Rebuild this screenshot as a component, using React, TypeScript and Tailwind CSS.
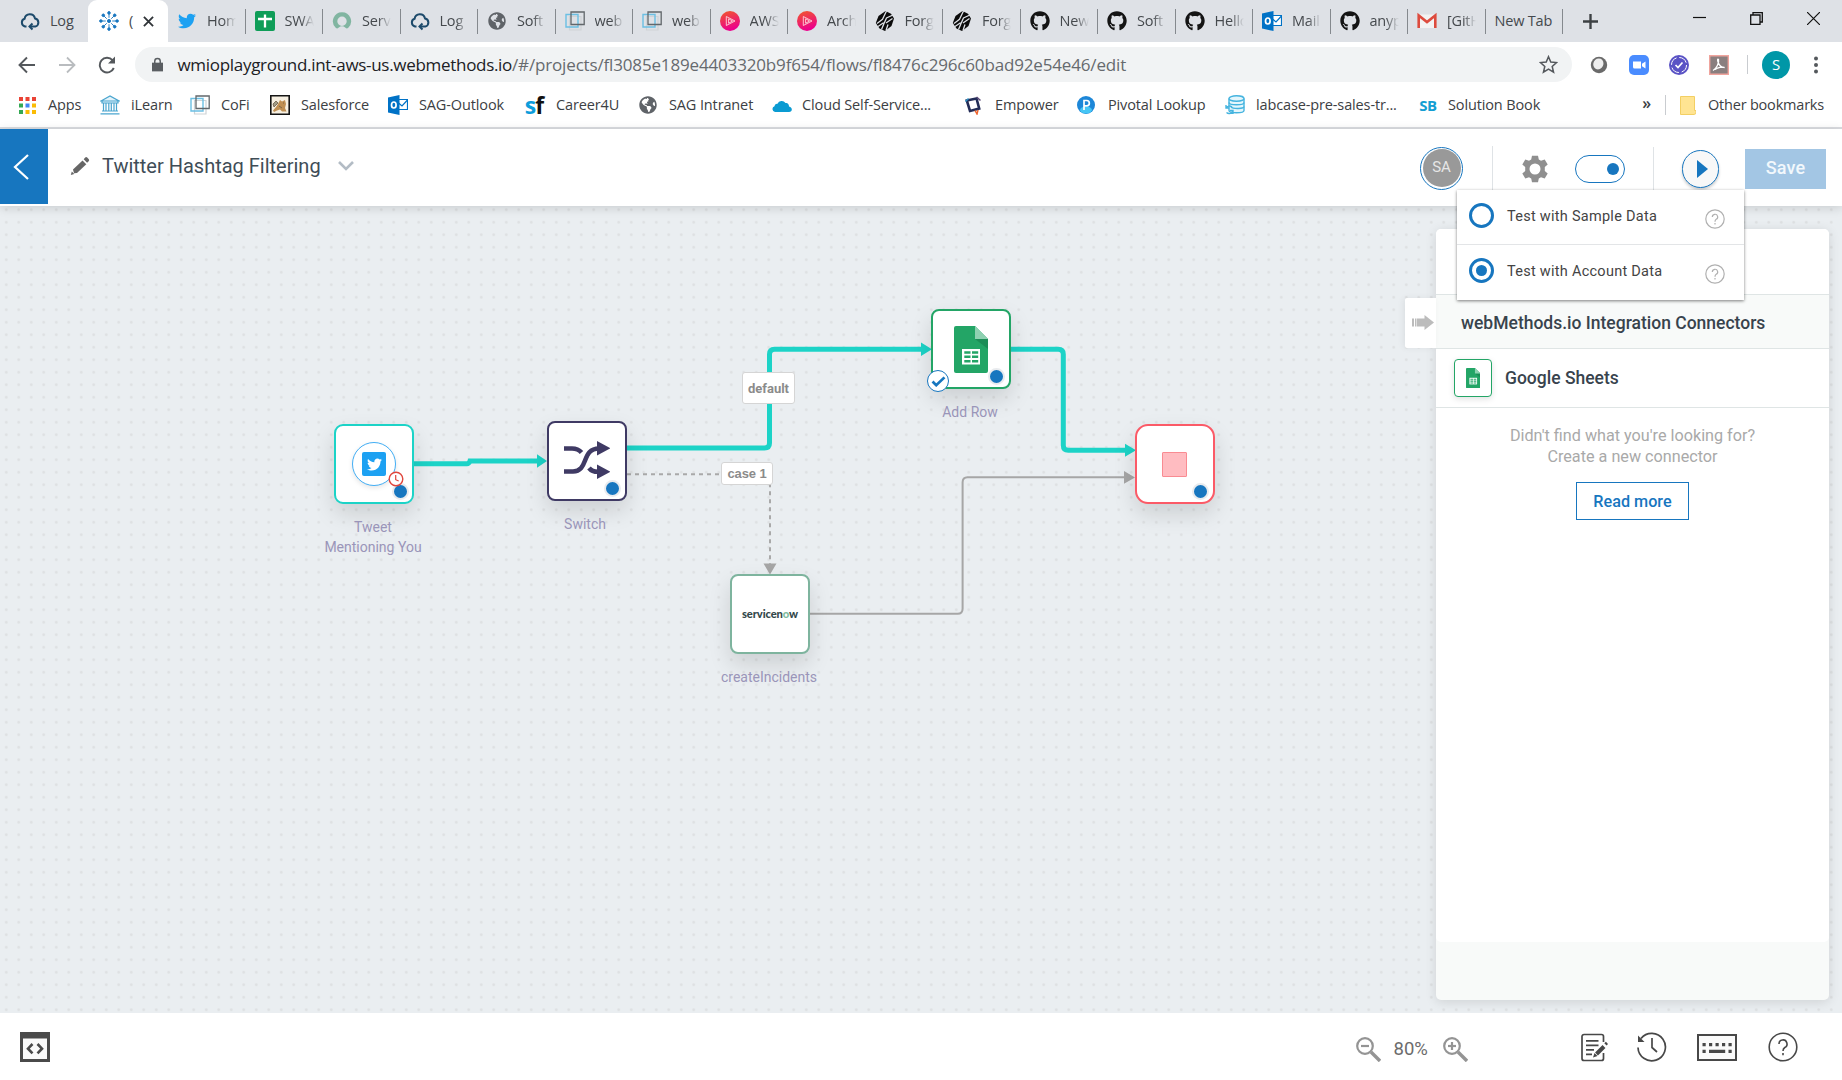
import React from "react";
import { FaTwitter, FaGithub, FaGlobeAmericas } from "react-icons/fa";

const CloudTab = () => (
  <svg viewBox="0 0 20 20" className="h-5 w-5" fill="none" stroke="#1d4a6b" strokeWidth="2">
    <path d="M6.500 15.500H5a4 4 0 0 1-.4-7.700A5.300 5.300 0 0 1 15 7.500a4.100 4.100 0 0 1 .3 8H10" />
    <path d="M12.500 12.500l-3 3 3 3" />
  </svg>
);
const Hub = () => (
  <svg viewBox="0 0 20 20" className="h-5 w-5" fill="#1776bf" stroke="#1776bf" strokeWidth="0.9">
    <circle cx="10" cy="10" r="1.6" />
    {[0, 45, 90, 135, 180, 225, 270, 315].map((a) => (
      <g key={a} transform={`rotate(${a} 10 10)`}>
        <path d="M10 6.800V3" />
        <circle cx="10" cy="1.900" r="1.300" />
      </g>
    ))}
  </svg>
);
const SheetPlus = () => (
  <svg viewBox="0 0 20 20" className="h-5 w-5">
    <rect width="20" height="20" rx="2" fill="#0f9d58" />
    <path d="M10 3.500v13M3 8h14" stroke="#fff" strokeWidth="2.300" />
  </svg>
);
const NowRing = () => (
  <svg viewBox="0 0 20 20" className="h-5 w-5">
    <path d="M10 1.200a9 9 0 0 0-6.300 15.500c1 .9 1.800.9 2.800.1a5.500 5.500 0 0 1 7 0c1 .8 1.800.8 2.800-.1A9 9 0 0 0 10 1.200zM10 15a4.700 4.700 0 1 1 0-9.400 4.700 4.700 0 0 1 0 9.400z" fill="#81b5a1" />
  </svg>
);
const Squares = () => (
  <svg viewBox="0 0 20 20" className="h-5 w-5" fill="none">
    <path d="M4.500 5.500h11.500v13.500H4.500z" stroke="#cfd3d6" strokeWidth="1.200" />
    <path d="M1 3.500h12v12.500H1z" stroke="#6bbfe3" strokeWidth="1.400" />
    <path d="M6 1h13.200v12.500H6z" stroke="#62676b" strokeWidth="1.300" />
  </svg>
);
const Plural = () => (
  <svg viewBox="0 0 20 20" className="h-5 w-5">
    <defs>
      <linearGradient id="ps" x1="0" y1="0" x2="0.3" y2="1">
        <stop offset="0" stopColor="#f15b2a" />
        <stop offset="1" stopColor="#ec008c" />
      </linearGradient>
    </defs>
    <circle cx="10" cy="10" r="10" fill="url(#ps)" />
    <path d="M6.300 5.500v9M6.300 5.500l8.700 4.500-8.700 4.500M8.600 7.800v4.400l4-2.200z" stroke="#ffd5dd" strokeWidth="0.900" fill="none" />
  </svg>
);
const Forge = () => (
  <svg viewBox="0 0 20 20" className="h-5 w-5">
    <path d="M10.500 0L16 2.800 19 7.500 16.500 15 10 20 4.500 17.500.800 12 3.500 5z" fill="#0b0b0b" />
    <path d="M2 12.500l5.500-4.200L11.500 0M6.500 18.500L9 12.500l2.500-5.500L19 3.500M3 15.500l5.500-3.800M11 12l6.500-4.500M11 19.500l2-6" stroke="#dee1e6" strokeWidth="1.300" fill="none" />
  </svg>
);
const Github = () => <FaGithub className="h-5 w-5 text-[#141414]" />;
const Globe = () => <FaGlobeAmericas className="h-[18px] w-[18px] text-[#5f6368]" />;
const Outlook = () => (
  <svg viewBox="0 0 20 20" className="h-5 w-5">
    <path d="M10 4.500h9.500v10H10z" fill="#fff" stroke="#0072c6" strokeWidth="1.200" />
    <path d="M10.500 8l3.500 3 5.500-6" stroke="#0072c6" strokeWidth="1.200" fill="none" />
    <path d="M0 2.500L11.500 0v20L0 17.500z" fill="#0072c6" />
    <ellipse cx="5.800" cy="10" rx="2.300" ry="3" fill="none" stroke="#fff" strokeWidth="1.700" />
  </svg>
);
const Gmail = () => (
  <svg viewBox="0 0 20 20" className="h-5 w-5">
    <path d="M1 3.500h18V17H1z" fill="#f3f3f3" />
    <path d="M1.700 17V4.500L10 11l8.300-6.500V17" fill="none" stroke="#dd4b3e" strokeWidth="2.600" />
  </svg>
);

const tabs: { label: string; icon: React.ReactNode }[] = [
  { label: "Hom", icon: <FaTwitter className="h-[18px] w-[18px] text-[#1da1f2]" /> },
  { label: "SWA", icon: <SheetPlus /> },
  { label: "Serv", icon: <NowRing /> },
  { label: "Log", icon: <CloudTab /> },
  { label: "Soft", icon: <Globe /> },
  { label: "web", icon: <Squares /> },
  { label: "web", icon: <Squares /> },
  { label: "AWS", icon: <Plural /> },
  { label: "Arch", icon: <Plural /> },
  { label: "Forg", icon: <Forge /> },
  { label: "Forg", icon: <Forge /> },
  { label: "New", icon: <Github /> },
  { label: "Soft", icon: <Github /> },
  { label: "Hello", icon: <Github /> },
  { label: "Mail", icon: <Outlook /> },
  { label: "anyp", icon: <Github /> },
  { label: "[GitH", icon: <Gmail /> },
];

const TabStrip = () => (
  <div className="flex h-[42px] shrink-0 bg-[#dee1e6] text-[14.500px] tracking-[-0.2px] text-[#45494d]">
    <div className="flex w-[88px] shrink-0 items-center pl-5">
      <CloudTab />
      <span className="ml-2.5">Log</span>
    </div>
    <div className="flex w-[80px] shrink-0 items-center rounded-t-[9px] bg-white pl-[11px]">
      <Hub />
      <span className="ml-[10px] w-3">(</span>
      <svg viewBox="0 0 12 12" className="ml-0.5 h-[11px] w-[11px]" stroke="#303438" strokeWidth="2">
        <path d="M1 1l10 10M11 1L1 11" />
      </svg>
    </div>
    {tabs.map((t, i) => (
      <div key={i} className="relative flex w-[77.500px] shrink-0 items-center pl-[9px]">
        <span className="flex w-5 justify-center">{t.icon}</span>
        <span className="ml-[10px] w-[29px] whitespace-nowrap [mask-image:linear-gradient(90deg,#000_55%,transparent)]">{t.label}</span>
        <span className="absolute top-[9px] right-0 h-[25px] w-px bg-[#85898e]" />
      </div>
    ))}
    <div className="relative flex w-[77.500px] shrink-0 items-center pl-[9px]">
      New Tab
      <span className="absolute top-[9px] right-0 h-[25px] w-px bg-[#85898e]" />
    </div>
    <div className="flex items-center pl-5">
      <svg viewBox="0 0 14 14" className="h-[15px] w-[15px]" stroke="#3c4043" strokeWidth="2.200">
        <path d="M7 0v14M0 7h14" />
      </svg>
    </div>
    <div className="ml-auto flex h-[37px] items-center gap-[44px] pr-[22px]">
      <svg viewBox="0 0 13 13" className="h-[13px] w-[13px]" stroke="#111" strokeWidth="1.200"><path d="M0 5.500h13" /></svg>
      <svg viewBox="0 0 13 13" className="h-[13px] w-[13px]" stroke="#111" strokeWidth="1.300" fill="none"><path d="M.7 3h9.300v9.300H.7zM3 3V.7h9.300V10H10" /></svg>
      <svg viewBox="0 0 13 13" className="h-[13px] w-[13px]" stroke="#111" strokeWidth="1.200"><path d="M0 0l13 13M13 0L0 13" /></svg>
    </div>
  </div>
);

const AddressBar = () => (
  <div className="flex h-[45px] shrink-0 items-center bg-white">
    <svg viewBox="0 0 18 18" className="ml-[18px] h-[18px] w-[18px]" fill="none" stroke="#54585c" strokeWidth="1.900"><path d="M17 9H2M9 1.500L1.500 9 9 16.500" /></svg>
    <svg viewBox="0 0 18 18" className="ml-[22px] h-[18px] w-[18px]" fill="none" stroke="#b9bcbf" strokeWidth="1.800"><path d="M1 9h15M9 1.500L16.500 9 9 16.500" /></svg>
    <svg viewBox="0 0 18 18" className="ml-[22px] h-[18px] w-[18px]" fill="none" stroke="#54585c" strokeWidth="1.900"><path d="M15.800 12A7.300 7.300 0 1 1 14.500 4.200" /><path d="M17 .5v7h-7z" fill="#54585c" stroke="none" /></svg>
    <div className="ml-[19px] flex h-[35px] w-[1437px] items-center rounded-full bg-[#f1f3f4] pr-[14px] pl-[17px]">
      <svg viewBox="0 0 12 15" className="h-[15px] w-[11px]" fill="#5a5e62"><path d="M0 5.500h12V15H0z" /><path d="M3 6V4a3 3 0 0 1 6 0v2" stroke="#5a5e62" strokeWidth="1.600" fill="none" /></svg>
      <span className="ml-[14.500px] text-[17px] tracking-[-0.160px] whitespace-nowrap text-[#666a6e]">
        <span className="tracking-[-0.3px] text-[#202124]">wmioplayground.int-aws-us.webmethods.io</span>/#/projects/fl3085e189e4403320b9f654/flows/fl8476c296c60bad92e54e46/edit
      </span>
      <svg viewBox="0 0 20 20" className="ml-auto h-[19px] w-[19px]" fill="none" stroke="#54585c" strokeWidth="1.600"><path d="M10 1.800l2.400 5.700 6.100.5-4.600 4 1.400 6L10 14.800 4.700 18l1.400-6-4.600-4 6.100-.5z" /></svg>
    </div>
    <div className="flex flex-1 items-center pl-[17px]">
      <svg viewBox="0 0 20 20" className="h-5 w-5"><circle cx="10" cy="10" r="8.200" fill="#6a6a6a" /><ellipse cx="9.300" cy="8.800" rx="5" ry="5.600" transform="rotate(25 9 9)" fill="#eee" /></svg>
      <svg viewBox="0 0 20 20" className="ml-5 h-5 w-5"><rect width="20" height="20" rx="5" fill="#4a8cff" /><path d="M4 6.500h8v7H5.500A1.500 1.500 0 0 1 4 12zM13 8.800l3.500-2.300v7L13 11.200z" fill="#fff" /></svg>
      <svg viewBox="0 0 20 20" className="ml-5 h-5 w-5"><circle cx="10" cy="10" r="10" fill="#5a53c5" /><circle cx="10" cy="10" r="7.500" fill="none" stroke="#fff" strokeDasharray="9 2.800" /><path d="M6.500 10l2.500 2.500 4.500-5" fill="none" stroke="#fff" strokeWidth="1.700" /></svg>
      <svg viewBox="0 0 20 20" className="ml-5 h-5 w-5"><path d="M.7.700h18.600v18.600H.7z" fill="#8a7f7f" stroke="#f0a49d" strokeWidth="1.400" /><path d="M4 15.500c3-1.500 6.500-7.500 5.500-11-.8-1-1.300.5-.5 2.500 1 3 3.500 5.500 6.500 5.500-2-1-6.500 0-9.500 2" fill="none" stroke="#fff" strokeWidth="1.300" /></svg>
      <span className="ml-[18px] h-[19px] w-px bg-[#c9ccd0]" />
      <span className="ml-[14px] flex h-7 w-7 items-center justify-center rounded-full bg-[#0097a7] text-[15px] text-white">S</span>
      <svg viewBox="0 0 4 18" className="ml-6 h-[18px] w-1" fill="#54585c"><circle cx="2" cy="2.500" r="2" /><circle cx="2" cy="9" r="2" /><circle cx="2" cy="15.500" r="2" /></svg>
    </div>
  </div>
);

const AppsGrid = () => (
  <svg viewBox="0 0 17 17" className="mr-[3px] h-[17px] w-[17px]">
    {["#ea4335", "#ea4335", "#ea4335", "#34a853", "#4285f4", "#fbbc05", "#34a853", "#fbbc05", "#fbbc05"].map((c, i) => (
      <rect key={i} x={(i % 3) * 6.5} y={Math.floor(i / 3) * 6.5} width="4" height="4" fill={c} />
    ))}
  </svg>
);
const Bank = () => (
  <svg viewBox="0 0 20 20" className="h-5 w-5" stroke="#4aa5cf" strokeWidth="1.200" fill="#e3f3fa">
    <path d="M1 6l9-5 9 5zM2 6h16v2H2zM3.500 8v8M6 8v8M8.800 8v8M11.300 8v8M14 8v8M16.500 8v8M2 16h16M.5 18.800h19" />
  </svg>
);
const Tiger = () => (
  <svg viewBox="0 0 20 20" className="h-5 w-5">
    <path d="M.8.800h18.400v18.400H.8z" fill="#f7f0e2" stroke="#151515" strokeWidth="1.600" />
    <path d="M10 5l2 1.500 3-1.500 1 4-1 4 1.500 3.500H12l-2-2-3 1-3 1.500-1-1.500L6 12l2-3z" fill="#c08f52" />
    <path d="M3 9l3-3 2 2-4 4zM9 11l3 2M13 8h1" stroke="#6b5a45" strokeWidth="0.800" fill="#a19c86" />
  </svg>
);
const Career = () => (
  <span className="flex font-['Open_Sans',sans-serif] text-[23px] leading-5 font-bold tracking-[-1px] text-[#0d9ddb]">
    s<span className="text-[#111]">f</span>
  </span>
);
const CloudBlue = () => (
  <svg viewBox="0 0 20 20" className="h-5 w-5" fill="#0a9bd2"><path d="M3 17a3 3 0 0 1-.5-5.800C3 9 4.500 8.500 5.500 8.800A4.600 4.600 0 0 1 13.500 8c3 0 3.500 2 3.500 3.500 4 1 3.500 5.500 0 5.500z" /></svg>
);
const EmpowerIcon = () => (
  <svg viewBox="0 0 20 20" className="h-5 w-5" fill="none" stroke="#232c57" strokeWidth="2.600">
    <path d="M3.800 5.500L13.500 3.500 16.200 13.500 7 16z" />
    <path d="M2.500 6.500l3-3" stroke="#2b8fc4" strokeWidth="1.500" />
    <path d="M13.500 2l4 3.500" stroke="#5a4a78" strokeWidth="1.600" />
    <path d="M12 15.500l2 3.500 1-4" stroke="#f0642d" strokeWidth="1.500" />
  </svg>
);
const Pivotal = () => (
  <svg viewBox="0 0 20 20" className="h-5 w-5">
    <circle cx="10" cy="10" r="9" fill="#1d87d8" /><ellipse cx="10" cy="15" rx="6" ry="3.500" fill="#46c6f5" />
    <path d="M8 15V5.500h2.700a2.600 2.600 0 0 1 0 5.300H8" stroke="#fff" strokeWidth="1.700" fill="none" />
  </svg>
);
const Database = () => (
  <svg viewBox="0 0 20 20" className="h-5 w-5" fill="#e4f6fc" stroke="#45b4df" strokeWidth="1.400">
    <path d="M4 3.500v12c0 3 15 3 15 0v-12" /><ellipse cx="11.500" cy="3.500" rx="7.500" ry="2.700" />
    <path d="M4 7.500c0 3 15 3 15 0M6 12c2 2 13 2 13-.5" fill="none" />
    <path d="M1 13a4 4 0 0 1 6-1M8 15.500a4 4 0 0 1-6.500 2M1 10v3h3M8 19v-3.500H5" fill="none" />
  </svg>
);
const SB = () => <span className="text-[15px] font-bold tracking-[-0.5px] text-[#149ed2]">SB</span>;

const bookmarks = [
  { w: "w-[81px]", gap: "ml-[9px]", label: "Apps", icon: <AppsGrid /> },
  { w: "w-[90px]", gap: "ml-[11px]", label: "iLearn", icon: <Bank /> },
  { w: "w-[80px]", gap: "ml-[11px]", label: "CoFi", icon: <Squares /> },
  { w: "w-[118px]", gap: "ml-[11px]", label: "Salesforce", icon: <Tiger /> },
  { w: "w-[136px]", gap: "ml-[11px]", label: "SAG-Outlook", icon: <Outlook /> },
  { w: "w-[114px]", gap: "ml-[12px]", label: "Career4U", icon: <Career /> },
  { w: "w-[134px]", gap: "ml-[11px]", label: "SAG Intranet", icon: <Globe /> },
  { w: "w-[191px]", gap: "ml-[10px]", label: "Cloud Self-Service...", icon: <CloudBlue /> },
  { w: "w-[113px]", gap: "ml-[12px]", label: "Empower", icon: <EmpowerIcon /> },
  { w: "w-[149px]", gap: "ml-[12px]", label: "Pivotal Lookup", icon: <Pivotal /> },
  { w: "w-[193px]", gap: "ml-[11px]", label: "labcase-pre-sales-tr...", icon: <Database /> },
  { w: "w-[200px]", gap: "ml-[10px]", label: "Solution Book", icon: <SB /> },
];

const Bookmarks = () => (
  <div className="flex h-[42px] shrink-0 items-center border-b-2 border-[#dadce0] bg-white pb-1 pl-[19px] text-[14.500px] tracking-[-0.130px] text-[#3c4043]">
    {bookmarks.map((b) => (
      <div key={b.label} className={`flex shrink-0 items-center whitespace-nowrap ${b.w}`}>
        <span className="flex w-5 shrink-0 justify-center">{b.icon}</span>
        <span className={b.gap}>{b.label}</span>
      </div>
    ))}
    <div className="ml-auto flex items-center pr-[18px] tracking-[-0.2px] whitespace-nowrap">
      <span className="mb-1 text-[16px] font-semibold">»</span>
      <span className="ml-[14px] h-5 w-px bg-[#c9ccd0]" />
      <svg viewBox="0 0 16 19" className="ml-[14px] h-[19px] w-4"><path d="M.5.500h14v14H16v3l-2 1H.5z" fill="#ffe492" stroke="#f3cf63" /></svg>
      <span className="ml-3">Other bookmarks</span>
    </div>
  </div>
);

const HelpCircle = ({ className, stroke }: { className: string; stroke: number }) => (
  <svg viewBox="0 0 30 30" className={className} fill="none" stroke="currentColor" strokeWidth={stroke}>
    <circle cx="15" cy="15" r="13.800" />
    <path d="M11 12a4 4 0 1 1 5.800 3.500c-1.300.8-1.800 1.500-1.800 3.500M15 21v2.200" />
  </svg>
);

const TestOption = ({ label, checked }: { label: string; checked?: boolean }) => (
  <div className="flex h-[52px] items-center pl-3">
    <span className="mb-[1px] flex h-[25px] w-[25px] items-center justify-center rounded-full border-[3.300px] border-[#1776bf]">
      {checked && <span className="h-[11px] w-[11px] rounded-full bg-[#1776bf]" />}
    </span>
    <span className="ml-[13px] w-[198px] pt-px text-[14.500px] tracking-[0.270px] text-[#444]">{label}</span>
    <HelpCircle className="mt-[6px] h-5 w-5 text-[#b0b0b0]" stroke={1.8} />
  </div>
);

const Header = () => (
  <div className="relative z-20 flex h-[77px] shrink-0 bg-white shadow-[0_2px_10px_rgba(0,0,0,0.14)]">
    <div className="flex h-[75px] w-12 items-center justify-center bg-[#1776bf]">
      <svg viewBox="0 0 16 26" className="mr-[6px] h-[26px] w-4" fill="none" stroke="#fff" strokeWidth="2.200"><path d="M15 1L2 13l13 12" /></svg>
    </div>
    <div className="flex h-[74px] flex-1 items-center">
      <svg viewBox="0 0 20 20" className="ml-[22px] h-5 w-5" fill="#666"><path d="M.8 19l1-3.500 2.500 2.500zM13.700 3.300l1.500-1.800q1-.8 2 0l1.600 1.700q.8 1-.1 2l-1.600 1.500z" /><path d="M3 13.500l9.500-9 3.800 3.700-9.300 8.800-3 .3z" /></svg>
      <span className="ml-[12px] w-[218px] text-[20px] whitespace-nowrap text-[#3f4d57]">Twitter Hashtag Filtering</span>
      <svg viewBox="0 0 16 10" className="ml-[18px] h-[10px] w-4" fill="none" stroke="#b3bcc5" strokeWidth="2.600"><path d="M1 1l7 7 7-7" /></svg>
    </div>
    <div className="flex h-[80px] items-center">
      <div className="mb-[2px] flex h-[43px] w-[43px] items-center justify-center rounded-full border border-[#1776bf]">
        <div className="flex h-[38px] w-[38px] items-center justify-center rounded-full bg-[#999] pb-[2px] text-[15px] text-[#e6e6e6]">SA</div>
      </div>
      <span className="ml-[29px] h-[46px] w-px bg-[#dfe3e6]" />
      <svg viewBox="0 0 28 28" className="ml-[28px] h-7 w-7" fill="#8f8f8f">
        <path fillRule="evenodd" d="M11 .7h6l.8 3.800 2.200 1.200L23.700 4.400l3 5.200L23.800 12v4l2.900 2.400-3 5.200L20 22.300l-2.200 1.200-.8 3.800h-6l-.8-3.800L8 22.300l-3.700 1.300-3-5.200L4.200 16v-4L1.300 9.600l3-5.200L8 5.700l2.200-1.200zM14 8.500a5.500 5.500 0 1 0 0 11 5.500 5.500 0 0 0 0-11z" />
      </svg>
      <div className="ml-[26px] flex h-7 w-[50px] items-center justify-end rounded-full border border-[#1776bf] pr-[5px]">
        <span className="h-3 w-3 rounded-full bg-[#1776bf]" />
      </div>
      <span className="ml-7 h-[44px] w-px bg-[#dfe3e6]" />
      <div className="relative ml-7 flex h-[38px] w-[37px] items-center justify-center rounded-full border border-[#1776bf] bg-[#f8f8f8] shadow-[0_2px_3px_rgba(0,0,0,0.2)]">
        <svg viewBox="0 0 11 18" className="ml-1 h-[18px] w-[11px]" fill="#1776bf"><path d="M0 0l11 9-11 9z" /></svg>
      </div>
      <div className="mr-4 ml-[26px] flex h-10 w-[81px] items-center justify-center bg-[#a3c6e4] pb-[3px] text-[18px] font-medium tracking-[0.1px] text-[#f2f8fc]">Save</div>
    </div>
    <div className="absolute top-[61px] right-[98px] h-[110px] w-[287px] bg-white shadow-[0_1px_3px_rgba(0,0,0,0.5)]">
      <div className="h-[55px] border-b border-[#e3e5e7]"><TestOption label="Test with Sample Data" /></div>
      <TestOption label="Test with Account Data" checked />
    </div>
  </div>
);

const Sheet = ({ className }: { className: string }) => (
  <svg viewBox="0 0 34 47" className={className}>
    <path d="M2 0h19l13 13v32a2 2 0 0 1-2 2H2a2 2 0 0 1-2-2V2a2 2 0 0 1 2-2z" fill="#23a566" />
    <path d="M21 13h13v10z" fill="#1c8d57" />
    <path d="M21 0l13 13H21z" fill="#8ed1b1" />
    <path d="M8 23h18v15.500H8z" fill="#fff" />
    <path d="M10.300 25.300h6.200v2.500h-6.200zM18 25.300h6.200v2.500H18zM10.300 29.600h6.200v2.500h-6.200zM18 29.600h6.200v2.500H18zM10.300 33.900h6.200v2.500h-6.200zM18 33.900h6.200v2.500H18z" fill="#23a566" />
  </svg>
);

const StatusDot = ({ className }: { className: string }) => (
  <span className={`absolute h-[17px] w-[17px] rounded-full border-2 border-[#e9ebee] bg-[#1776bf] ${className}`} />
);

const nodeBox = "absolute flex h-20 w-20 items-center justify-center bg-white shadow-[0_10px_22px_rgba(0,0,0,0.13)]";
const nodeLabel = "absolute w-[140px] text-center text-[14px] leading-5 text-[#9a95b9]";

const Flow = () => (
  <>
    <svg className="absolute top-0 left-0 h-[807px] w-[1436px]" viewBox="0 206 1436 807" fill="none">
      <g stroke="#1cd3c7" strokeWidth="5">
        <path d="M413 463.800H467q2 0 3-2.800H538" />
        <path d="M626 448H764.500q5 0 5-5V354.300q0-5 5-5H922" />
        <path d="M1010 349.300H1058.300q5 0 5 5V445.300q0 5 5 5H1126" />
      </g>
      <path d="M537 454.300l10 6.700-10 6.700zM921 342.600l11 6.700-11 6.700zM1125 443.800l11 6.500-11 6.500z" fill="#1cd3c7" />
      <path d="M627 474.300H770V564" stroke="#a9a9a9" strokeWidth="2" strokeDasharray="4 4" />
      <path d="M809 613.700H957.600q5 0 5-5V482.300q0-5 5-5H1126" stroke="#a6a6a6" strokeWidth="2" />
      <path d="M763.500 563.500h13l-6.500 11zM1124 471l11 6.400-11 6.400z" fill="#a6a6a6" />
    </svg>

    <div className="absolute top-[166px] left-[742px] flex h-8 w-[53px] items-center justify-center rounded-[3px] border border-[#d5d5d5] bg-white pt-px text-[13px] font-bold text-[#8b8b8b]">default</div>
    <div className="absolute top-[256px] left-[721px] flex h-[23px] w-[52px] items-center justify-center rounded-[3px] border border-[#d5d5d5] bg-white font-['Liberation_Sans',sans-serif] text-[13px] font-bold tracking-[-0.1px] text-[#8b8b8b]">case 1</div>

    <div className={`${nodeBox} top-[218px] left-[334px] rounded-[9px] border-[2.400px] border-[#1cd3c7]`}>
      <div className="flex h-[44px] w-[44px] items-center justify-center rounded-full border border-[#42aef5] bg-white shadow-[0_2px_5px_rgba(0,0,0,0.1)]">
        <div className="flex h-6 w-6 items-center justify-center rounded-[2px] bg-[#1da1f2]"><FaTwitter className="h-[15px] w-[15px] text-white" /></div>
      </div>
      <StatusDot className="right-[3px] bottom-[2px]" />
      <svg viewBox="0 0 16 16" className="absolute right-[8px] bottom-[15px] h-4 w-4"><circle cx="8" cy="8" r="6.800" fill="#fff" stroke="#df463d" strokeWidth="1.400" /><path d="M7.700 4v4.700l3 1.300" fill="none" stroke="#df463d" strokeWidth="1.200" /></svg>
    </div>
    <div className={`${nodeLabel} top-[311px] left-[303px]`}>Tweet<br />Mentioning You</div>

    <div className={`${nodeBox} top-[215px] left-[547px] rounded-[8px] border-2 border-[#3f3a64]`}>
      <svg viewBox="0 0 46 38" className="mt-[-2px] h-[38px] w-[46px]" fill="none" stroke="#3f3a64" strokeWidth="4.600">
        <path d="M0 7.500h8q6 0 9.500 4" /><path d="M0 30.500h9c16 0 8-23 26-23" /><path d="M25 27q3 3.800 9 3.800" />
        <path d="M33 0l13.500 7.300L33 14.500zM33 23.500l13.500 7.300L33 38z" fill="#3f3a64" stroke="none" />
      </svg>
      <StatusDot className="right-[4px] bottom-[2px]" />
    </div>
    <div className={`${nodeLabel} top-[308px] left-[515px]`}>Switch</div>

    <div className={`${nodeBox} top-[103px] left-[931px] rounded-[8px] border-[2.400px] border-[#23a566]`}>
      <Sheet className="h-[47px] w-[34px]" />
      <StatusDot className="right-[4px] bottom-[2px]" />
      <div className="absolute -bottom-[5px] -left-[6px] flex h-[22px] w-[22px] items-center justify-center rounded-full border border-[#1776bf] bg-white">
        <svg viewBox="0 0 16 12" className="h-[11px] w-[15px]" fill="none" stroke="#1776bf" strokeWidth="3"><path d="M1.500 6l4 4L14.500 1.500" /></svg>
      </div>
    </div>
    <div className={`${nodeLabel} top-[196px] left-[900px]`}>Add Row</div>

    <div className={`${nodeBox} top-[218px] left-[1134.500px] rounded-[13px] border-[2.400px] border-[#fb5a67]`}>
      <div className="h-[25px] w-[25px] rounded-[1px] border border-[#f98b92] bg-[#ffbcc1]" />
      <StatusDot className="right-[4px] bottom-[2px]" />
    </div>

    <div className={`${nodeBox} top-[368px] left-[730px] rounded-[8px] border-2 border-[#7eb49e]`}>
      <span className="pt-px font-['Lato',sans-serif] text-[11.200px] font-black tracking-[-0.1px] text-[#33474a]">servicen<span className="text-[#7fbda0]">o</span>w</span>
    </div>
    <div className={`${nodeLabel} top-[461px] left-[699px]`}>createIncidents</div>
  </>
);

const ConnectorPanel = () => (
  <div className="relative z-10 flex h-[771px] w-[393px] flex-col rounded-[5px] bg-[#f8faf9] shadow-[0_2px_12px_rgba(0,0,0,0.12)]">
    <div className="absolute top-[69px] -left-[31px] flex h-[50px] w-[31px] items-center justify-end rounded-l-[2px] bg-white pr-0.5 pb-[2px] shadow-[-2px_0_6px_rgba(0,0,0,0.06)]">
      <svg viewBox="0 0 22 15" className="h-[15px] w-[22px]" fill="#bcbcbc"><path d="M0 3.500h2v8H0zM3 3.500h1.500v8H3zM5 3.500h7.500V0L22 7.500 12.500 15v-3.500H5z" /></svg>
    </div>
    <div className="flex h-[713px] flex-col rounded-[5px] bg-white">
      <div className="h-[66px] border-b border-[#dfe5e5]" />
      <div className="flex h-[54px] items-center border-b border-[#dfe5e5] bg-[#f8faf9] pt-[3px] pl-[25px] text-[17.500px] font-medium whitespace-nowrap text-[#38434d]">webMethods.io Integration Connectors</div>
      <div className="flex h-[59px] items-center border-b border-[#dfe5e5] pl-[18px]">
        <div className="flex h-[38px] w-[38px] items-center justify-center rounded-[4px] border border-[#23a566] bg-white shadow-[0_2px_6px_rgba(0,0,0,0.12)]"><Sheet className="h-5 w-[14.500px]" /></div>
        <span className="ml-[13px] text-[17.500px] font-medium text-[#38434d]">Google Sheets</span>
      </div>
      <div className="flex flex-col items-center pt-[17px] text-[16.200px] leading-[21px] text-[#a9a9a9]">
        <span>Didn't find what you're looking for?</span>
        <span>Create a new connector</span>
        <span className="mt-[15px] flex h-[38px] w-[113px] items-center justify-center border border-[#1776bf] text-[16.200px] font-medium text-[#1776bf]">Read more</span>
      </div>
    </div>
  </div>
);

const Magnifier = ({ plus }: { plus?: boolean }) => (
  <svg viewBox="0 0 25 25" className="h-[25px] w-[25px]" fill="none" stroke="#949494">
    <circle cx="9" cy="9" r="7.800" strokeWidth="2.200" />
    <path d="M15 15l9 9" strokeWidth="3.400" />
    <path d="M5 9h8" strokeWidth="2.200" />
    {plus && <path d="M9 5v8" strokeWidth="2.200" />}
  </svg>
);

const Footer = () => (
  <div className="relative z-10 flex h-[67px] shrink-0 items-center bg-white pt-px pr-[44px] pl-5 text-[#484848]">
    <svg viewBox="0 0 30 30" className="h-[30px] w-[30px]"><path d="M0 0h30v30H0z" fill="#4a4a4a" /><path d="M3 6.500h24V27H3z" fill="#fafafa" /><path d="M12.500 12l-4.500 4.700 4.500 4.700M17.500 12l4.500 4.700-4.500 4.700" fill="none" stroke="#4a4a4a" strokeWidth="2.600" /></svg>
    <div className="ml-auto flex items-center pt-1">
      <Magnifier />
      <span className="mt-[2px] ml-[12.500px] w-[49.500px] text-[18.500px] text-[#6c6c6c]">80%</span>
      <Magnifier plus />
    </div>
    <svg viewBox="0 0 27 29" className="ml-[113px] h-[29px] w-[27px]" fill="none" stroke="currentColor" strokeWidth="1.700"><path d="M22.500 9V3.500a2 2 0 0 0-2-2H3a2 2 0 0 0-2 2v22a2 2 0 0 0 2 2h17.500a2 2 0 0 0 2-2V20" /><path d="M5 7.800h12.500M5 12.300h12.500M5 16.800h8M5 21.300h6" strokeWidth="1.700" /><path d="M15.500 21L23 13.500" strokeWidth="4" /><path d="M12 24.500l1.500-4.500 3 3zM23.300 10.300l1.600-1.500 2.200 2.200-1.500 1.600z" fill="currentColor" stroke="none" /></svg>
    <svg viewBox="0 0 30 30" className="ml-[29px] h-[30px] w-[30px]" fill="none" stroke="currentColor" strokeWidth="1.700"><path d="M1 15.500A13.700 13.700 0 1 0 4 6.500M15 6v9.500l5 4.500" /><path d="M1 3.500v6.500h6.500z" fill="currentColor" stroke="none" /></svg>
    <svg viewBox="0 0 40 27" className="ml-[30px] h-[27px] w-10" fill="currentColor"><path d="M1 1h38v25H1z" fill="#fafafa" stroke="currentColor" strokeWidth="2" /><path d="M5.500 9h3.200v3.200H5.500zM12 9h3.200v3.200H12zM18.500 9h3.200v3.200h-3.200zM25 9h3.200v3.200H25zM31.500 9h3.200v3.200h-3.200zM5.500 15.800h3.200V19H5.500zM12 15.800h16.200V19H12zM31.500 15.800h3.200V19h-3.200z" /></svg>
    <HelpCircle className="ml-[31px] h-[30px] w-[30px]" stroke={1.6} />
  </div>
);

export default function App() {
  return (
    <div className="flex h-[1080px] w-[1842px] flex-col overflow-hidden bg-white font-['Open_Sans',sans-serif]">
      <TabStrip />
      <AddressBar />
      <Bookmarks />
      <div className="flex flex-1 flex-col font-['Roboto',sans-serif]">
        <Header />
        <div className="relative flex h-[807px] shrink-0 justify-end bg-[#eaeef1] bg-[radial-gradient(circle_at_center,#dee0e2_1.200px,transparent_1.500px)] bg-[size:12.500px_12.500px] bg-[position:0_-2.500px] pt-[23px] pr-[13px]">
          <Flow />
          <ConnectorPanel />
        </div>
        <Footer />
      </div>
    </div>
  );
}
